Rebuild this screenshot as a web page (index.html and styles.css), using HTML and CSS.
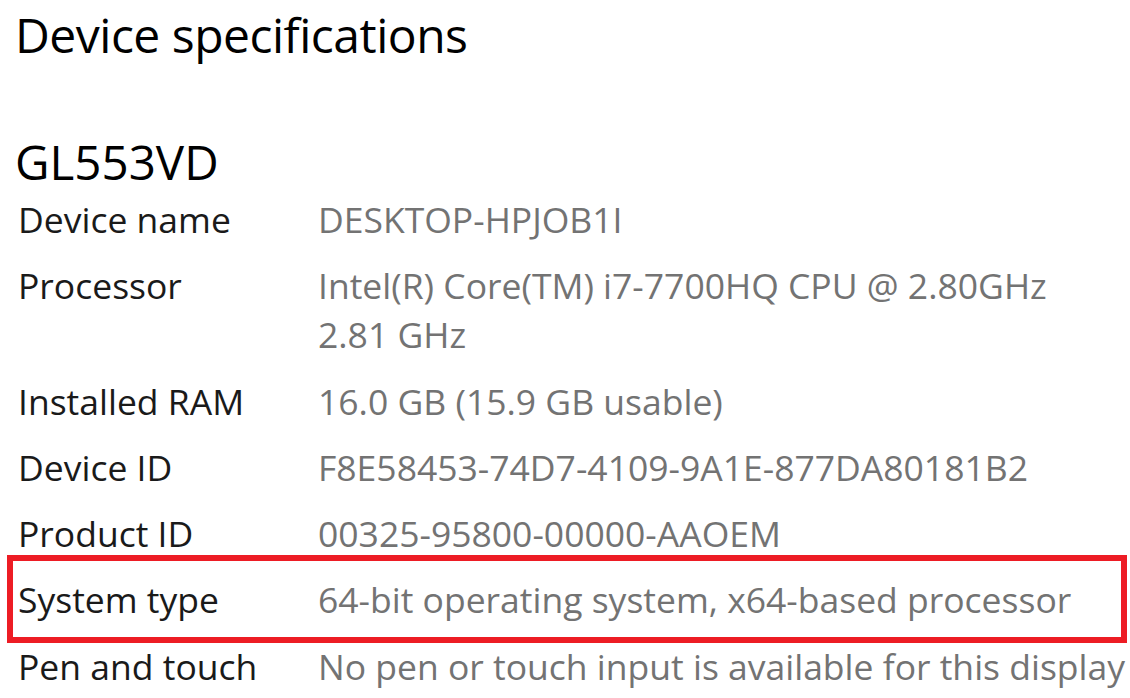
FILE: index.html
```html
<!DOCTYPE html>
<html>
<head>
<meta charset="utf-8">
<link rel="stylesheet" href="styles.css">
</head>
<body>
<main class="page">
  <h1 class="title">Device specifications</h1>
  <h2 class="model">GL553VD</h2>
  <div class="specs">
    <div class="row"><div class="label">Device name</div><div class="value">DESKTOP-HPJOB1I</div></div>
    <div class="row"><div class="label">Processor</div><div class="value">Intel(R) Core(TM) i7-7700HQ CPU @ 2.80GHz 2.81&nbsp;GHz</div></div>
    <div class="row"><div class="label">Installed RAM</div><div class="value">16.0 GB (15.9 GB usable)</div></div>
    <div class="row"><div class="label">Device ID</div><div class="value">F8E58453-74D7-4109-9A1E-877DA80181B2</div></div>
    <div class="row"><div class="label">Product ID</div><div class="value">00325-95800-00000-AAOEM</div></div>
    <div class="row highlight"><div class="label">System type</div><div class="value">64-bit operating system, x64-based processor</div></div>
    <div class="row"><div class="label">Pen and touch</div><div class="value nowrap">No pen or touch input is available for this display</div></div>
  </div>
</main>
</body>
</html>
```
FILE: styles.css
```css
html, body {
  margin: 0;
  padding: 0;
  background: #ffffff;
}
body {
  font-family: "Open Sans", "Noto Sans", "Liberation Sans", sans-serif;
  color: #000000;
  width: 1130px;
  height: 698px;
  overflow: hidden;
}
.page {
  padding: 0 0 0 15px;
}
.title {
  margin: 0;
  font-weight: 400;
  font-size: 48px;
  line-height: 70px;
  letter-spacing: -0.5px;
}
.model {
  margin: 60px 0 0 0;
  font-weight: 400;
  font-size: 47.5px;
  line-height: 64px;
}
.specs {
  display: flex;
  flex-direction: column;
  gap: 17.3px;
  padding-left: 3px;
  margin-top: 1px;
}
.row {
  display: flex;
  font-size: 35.5px;
  line-height: 49px;
  position: relative;
}
.label {
  width: 300px;
  flex: none;
  color: #1a1a1a;
}
.value {
  color: #737373;
  flex: 1;
}
.nowrap {
  white-space: nowrap;
}
.highlight::after {
  content: "";
  position: absolute;
  left: -11px;
  right: 3px;
  top: -20px;
  bottom: -19px;
  border: 6px solid #ed1c24;
}
```
